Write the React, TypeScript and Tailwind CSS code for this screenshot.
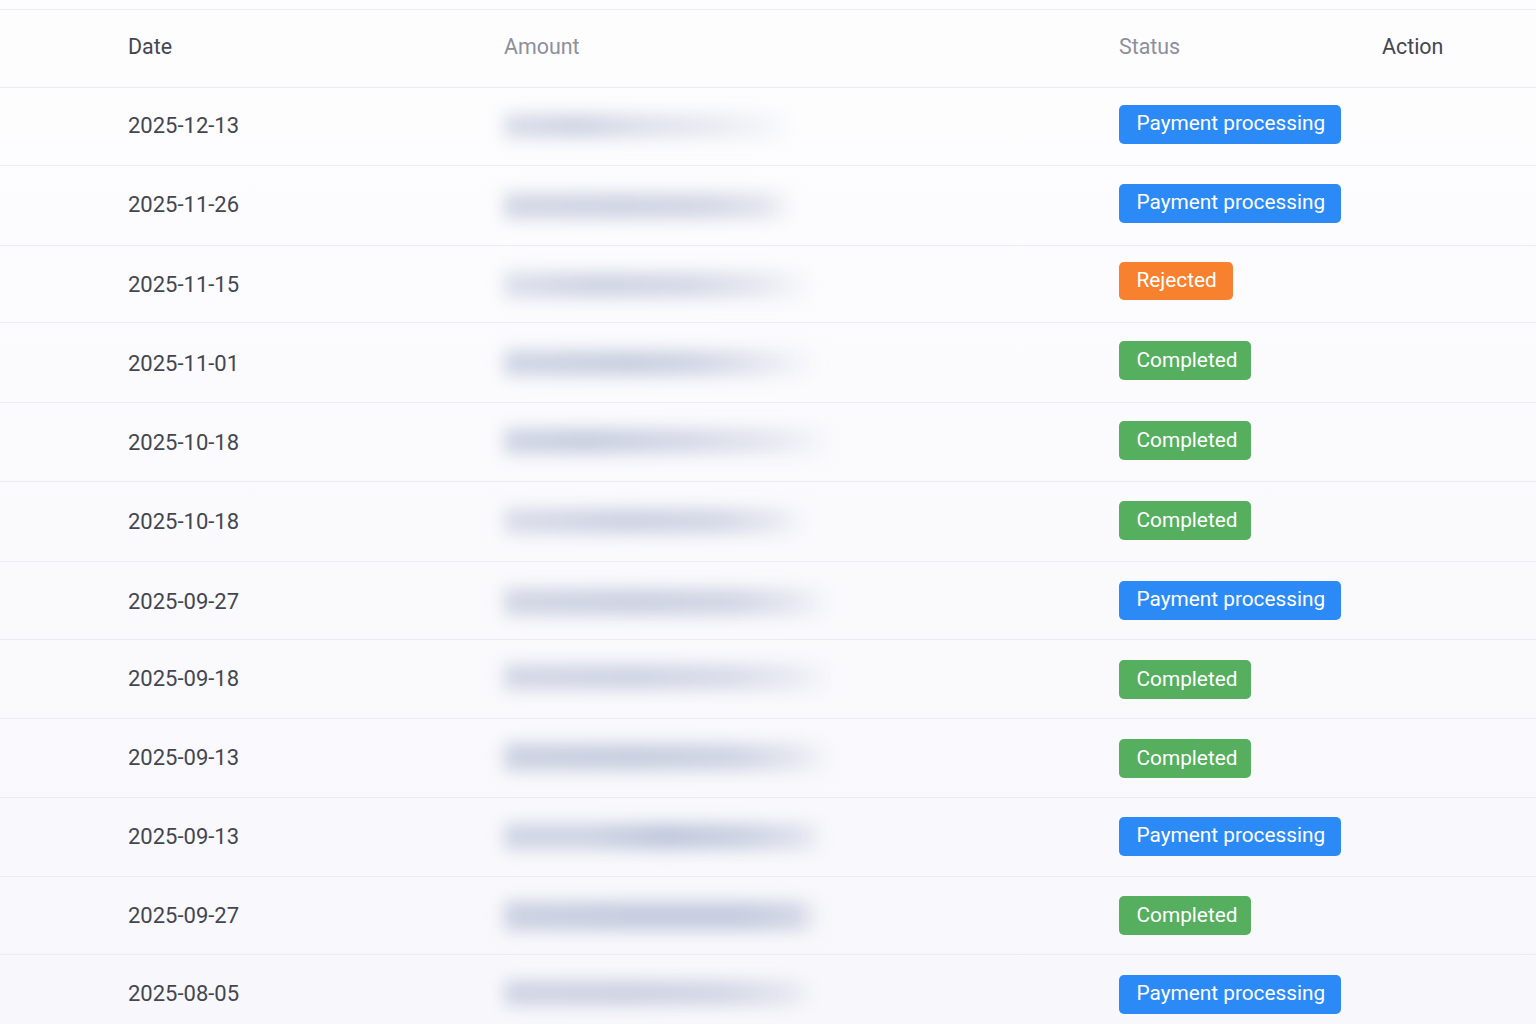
import React from 'react';

type Status = 'processing' | 'rejected' | 'completed';

interface Row {
    date: string;
    status: Status;
    rowClass: string;
    dateClass: string;
    barClass: string;
    badgeClass: string;
}

const rows: Row[] = [
    { date: '2025-12-13', status: 'processing', rowClass: 'h-[78px]', dateClass: 'mt-[25px]', badgeClass: 'mt-[17px]', barClass: 'mt-[26px] h-[24px] w-[288px] bg-[linear-gradient(90deg,#d9dde9_0%,#cfd4e3_25%,#dfe2ec_50%,#e9ebf2_75%,#f3f4f9_90%,transparent_100%)]' },
    { date: '2025-11-26', status: 'processing', rowClass: 'h-[80px]', dateClass: 'mt-[26px]', badgeClass: 'mt-[18px]', barClass: 'mt-[27px] h-[26px] w-[290px] bg-[linear-gradient(90deg,#d3d7e5_0%,#cfd4e3_40%,#d3d7e5_70%,#e3e5ee_90%,transparent_100%)]' },
    { date: '2025-11-15', status: 'rejected', rowClass: 'h-[77px]', dateClass: 'mt-[26px]', badgeClass: 'mt-[16px]', barClass: 'mt-[26px] h-[26px] w-[308px] bg-[linear-gradient(90deg,#dde0eb_0%,#cfd4e3_30%,#d5d9e7_60%,#e3e5ee_80%,#f0f1f7_92%,transparent_100%)]' },
    { date: '2025-11-01', status: 'completed', rowClass: 'h-[80px]', dateClass: 'mt-[28px]', badgeClass: 'mt-[18px]', barClass: 'mt-[27px] h-[26px] w-[314px] bg-[linear-gradient(90deg,#d0d5e4_0%,#c9cfe0_40%,#d0d5e4_60%,#e3e5ee_80%,#f1f2f8_92%,transparent_100%)]' },
    { date: '2025-10-18', status: 'completed', rowClass: 'h-[79px]', dateClass: 'mt-[27px]', badgeClass: 'mt-[18px]', barClass: 'mt-[25px] h-[26px] w-[328px] bg-[linear-gradient(90deg,#d0d5e4_0%,#c8cee0_25%,#d5d9e7_55%,#e3e5ee_78%,#f0f1f7_92%,transparent_100%)]' },
    { date: '2025-10-18', status: 'completed', rowClass: 'h-[80px]', dateClass: 'mt-[27px]', badgeClass: 'mt-[19px]', barClass: 'mt-[26px] h-[26px] w-[303px] bg-[linear-gradient(90deg,#dadde9_0%,#cdd2e2_40%,#d3d7e5_70%,#e7e9f1_90%,transparent_100%)]' },
    { date: '2025-09-27', status: 'processing', rowClass: 'h-[78px]', dateClass: 'mt-[27px]', badgeClass: 'mt-[19px]', barClass: 'mt-[26px] h-[28px] w-[328px] bg-[linear-gradient(90deg,#d3d7e5_0%,#cdd2e2_40%,#d3d7e5_70%,#e5e7f0_88%,transparent_100%)]' },
    { date: '2025-09-18', status: 'completed', rowClass: 'h-[79px]', dateClass: 'mt-[26px]', badgeClass: 'mt-[20px]', barClass: 'mt-[24px] h-[26px] w-[328px] bg-[linear-gradient(90deg,#d3d7e5_0%,#cfd4e3_40%,#d9dce9_70%,#e8eaf2_88%,transparent_100%)]' },
    { date: '2025-09-13', status: 'completed', rowClass: 'h-[79px]', dateClass: 'mt-[26px]', badgeClass: 'mt-[20px]', barClass: 'mt-[24px] h-[28px] w-[328px] bg-[linear-gradient(90deg,#cdd2e2_0%,#c9cfe0_40%,#d0d5e4_70%,#e3e5ee_88%,transparent_100%)]' },
    { date: '2025-09-13', status: 'processing', rowClass: 'h-[79px]', dateClass: 'mt-[26px]', badgeClass: 'mt-[19px]', barClass: 'mt-[25px] h-[27px] w-[322px] bg-[linear-gradient(90deg,#d0d5e4_0%,#d0d5e4_25%,#c0c8dc_50%,#ccd2e2_75%,#dfe2ec_92%,transparent_100%)]' },
    { date: '2025-09-27', status: 'completed', rowClass: 'h-[78px]', dateClass: 'mt-[26px]', badgeClass: 'mt-[19px]', barClass: 'mt-[24px] h-[30px] w-[318px] bg-[linear-gradient(90deg,#cdd2e2_0%,#c6cddf_40%,#c6cddf_75%,#d3d7e5_92%,transparent_100%)]' },
    { date: '2025-08-05', status: 'processing', rowClass: 'h-[70px]', dateClass: 'mt-[26px]', badgeClass: 'mt-[20px]', barClass: 'mt-[25px] h-[26px] w-[312px] bg-[linear-gradient(90deg,#d0d5e4_0%,#cdd2e2_40%,#d3d7e5_70%,#e3e5ee_90%,transparent_100%)]' },
];

const StatusBadge: React.FC<{ status: Status; className: string }> = ({ status, className }) => {
    if (status === 'processing') {
        return <span className={`${className} flex h-[39px] w-[222px] items-center rounded-[5px] bg-[#2b8af5] pb-[3px] pl-[17.5px] text-[20.8px] text-white`}>Payment processing</span>;
    }
    if (status === 'rejected') {
        return <span className={`${className} flex h-[38px] w-[114px] items-center rounded-[5px] bg-[#f8812f] pb-[3px] pl-[17.5px] text-[20.8px] text-white`}>Rejected</span>;
    }
    return <span className={`${className} flex h-[39px] w-[132px] items-center rounded-[5px] bg-[#56ae5f] pb-[2px] pl-[17.5px] text-[20.8px] text-white`}>Completed</span>;
};

const gridCols = 'grid grid-cols-[376px_615px_263px_1fr] items-start pl-[128px]';

export default function App() {
    return (
        <div className="h-[1024px] w-full overflow-hidden bg-gradient-to-b from-[#fdfdfe] to-[#f8f8fc] font-['Roboto',sans-serif] text-[22px] leading-[26px] text-[#44464f]">
            <div className="h-[10px] border-b border-[#ebebf1]" />
            <div className={`${gridCols} h-[78px] border-b border-[#ebebf1] pt-[24px] text-[21.4px]`}>
                <div>Date</div>
                <div className="text-[#8d8f9b]">Amount</div>
                <div className="text-[#8d8f9b]">Status</div>
                <div>Action</div>
            </div>
            {rows.map((row, i) => (
                <div key={i} className={`${gridCols} ${row.rowClass} border-b border-[#ebebf1]`}>
                    <div className={row.dateClass}>{row.date}</div>
                    <div className={`${row.barClass} rounded-sm blur-[8px]`} />
                    <StatusBadge status={row.status} className={row.badgeClass} />
                    <div />
                </div>
            ))}
        </div>
    );
}
